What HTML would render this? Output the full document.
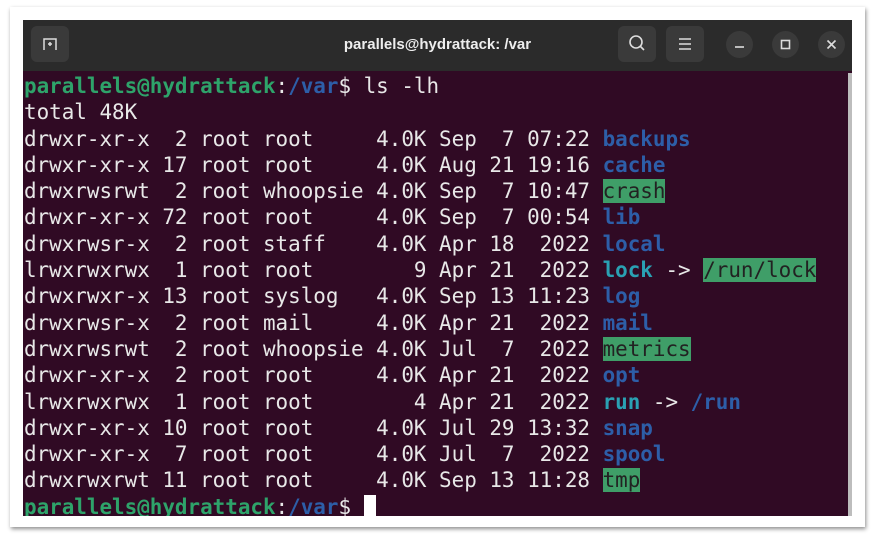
<!DOCTYPE html>
<html><head><style>
body{margin:0;width:882px;height:542px;background:#fff;position:relative;overflow:hidden;font-family:"Liberation Sans",sans-serif}
.card{position:absolute;left:10px;top:7px;width:855px;height:520px;background:#fff;box-shadow:1px 2px 4px rgba(0,0,0,.45)}
.term{position:absolute;left:23px;top:20px;width:829px;height:496px;background:#300a24;overflow:hidden}
.tb{position:absolute;left:0;top:0;width:829px;height:51px;background:#2b2b2b}
.title{position:absolute;left:0;right:0;top:16px;text-align:center;color:#eee;font-weight:bold;font-size:15px}
.btn{position:absolute;top:6px;width:38px;height:36px;border-radius:6px;background:#3a3a3a}
.cb{position:absolute;top:11px;width:27px;height:27px;border-radius:50%;background:#3a3a3a}
pre{position:absolute;left:1px;top:53px;margin:0;font-family:"DejaVu Sans Mono",monospace;font-size:20.9px;line-height:26.3px;color:#e8e8e8}
.g{color:#2ea36a;font-weight:bold}.b{color:#2d5ea8;font-weight:bold}
.d{color:#2d5ea8;font-weight:bold}.c{color:#2aa1b3;font-weight:bold}
.h{background:#3f9e68;color:#222}
.cur{display:inline-block;width:12px;height:24px;background:#fff;vertical-align:-5px}
.sb{position:absolute;right:0;top:53px;width:4px;height:443px;background:#bdbdbd}
</style></head><body>
<div class="card"></div>
<div class="term">
<div class="tb">
<div class="btn" style="left:8px"><svg width="38" height="36"><path d="M13 24v-11h12v11M17 18h4M19 16v4" stroke="#ddd" stroke-width="1.5" fill="none"/></svg></div>
<div class="title">parallels@hydrattack: /var</div>
<div class="btn" style="left:595px"><svg width="38" height="36"><circle cx="18" cy="16" r="6" stroke="#ddd" stroke-width="1.6" fill="none"/><path d="M22 20l4 4" stroke="#ddd" stroke-width="1.6"/></svg></div>
<div class="btn" style="left:643px"><svg width="38" height="36"><path d="M13 13h12M13 18h12M13 23h12" stroke="#ddd" stroke-width="1.6"/></svg></div>
<div class="cb" style="left:703px"><svg width="27" height="27"><path d="M9 16h9" stroke="#ddd" stroke-width="1.6"/></svg></div>
<div class="cb" style="left:749px"><svg width="27" height="27"><rect x="9.5" y="9.5" width="8" height="8" stroke="#ddd" stroke-width="1.6" fill="none"/></svg></div>
<div class="cb" style="left:795px"><svg width="27" height="27"><path d="M9.5 9.5l8 8M17.5 9.5l-8 8" stroke="#ddd" stroke-width="1.6"/></svg></div>
</div>
<pre><span class="g">parallels@hydrattack</span>:<span class="b">/var</span>$ ls -lh
total 48K
drwxr-xr-x  2 root root     4.0K Sep  7 07:22 <span class="d">backups</span>
drwxr-xr-x 17 root root     4.0K Aug 21 19:16 <span class="d">cache</span>
drwxrwsrwt  2 root whoopsie 4.0K Sep  7 10:47 <span class="h">crash</span>
drwxr-xr-x 72 root root     4.0K Sep  7 00:54 <span class="d">lib</span>
drwxrwsr-x  2 root staff    4.0K Apr 18  2022 <span class="d">local</span>
lrwxrwxrwx  1 root root        9 Apr 21  2022 <span class="c">lock</span> -&gt; <span class="h">/run/lock</span>
drwxrwxr-x 13 root syslog   4.0K Sep 13 11:23 <span class="d">log</span>
drwxrwsr-x  2 root mail     4.0K Apr 21  2022 <span class="d">mail</span>
drwxrwsrwt  2 root whoopsie 4.0K Jul  7  2022 <span class="h">metrics</span>
drwxr-xr-x  2 root root     4.0K Apr 21  2022 <span class="d">opt</span>
lrwxrwxrwx  1 root root        4 Apr 21  2022 <span class="c">run</span> -&gt; <span class="d">/run</span>
drwxr-xr-x 10 root root     4.0K Jul 29 13:32 <span class="d">snap</span>
drwxr-xr-x  7 root root     4.0K Jul  7  2022 <span class="d">spool</span>
drwxrwxrwt 11 root root     4.0K Sep 13 11:28 <span class="h">tmp</span>
<span class="g">parallels@hydrattack</span>:<span class="b">/var</span>$ <span class="cur"></span></pre>
<div class="sb"></div>
</div>
</body></html>
